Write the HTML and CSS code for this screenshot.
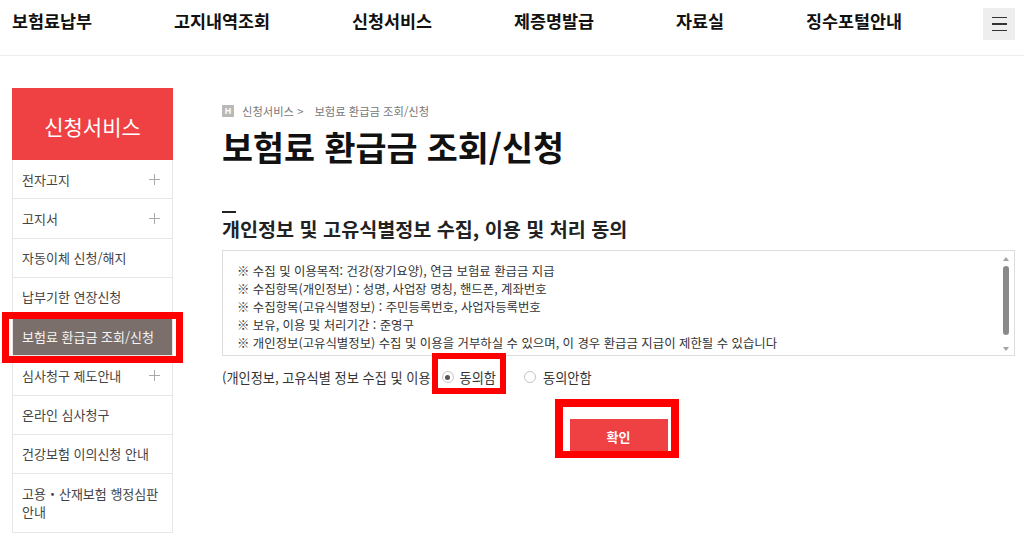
FILE: index.html
```html
<!DOCTYPE html>
<html lang="ko">
<head>
<meta charset="utf-8">
<title>보험료 환급금 조회/신청</title>
<link rel="stylesheet" href="styles.css">
</head>
<body>
<header class="topbar">
  <nav class="gnb">
    <a class="gnb-item">보험료납부</a>
    <a class="gnb-item">고지내역조회</a>
    <a class="gnb-item">신청서비스</a>
    <a class="gnb-item">제증명발급</a>
    <a class="gnb-item">자료실</a>
    <a class="gnb-item">징수포털안내</a>
  </nav>
  <button class="menu-btn" aria-label="menu">
    <span class="menu-line"></span><span class="menu-line"></span><span class="menu-line"></span>
  </button>
</header>

<div class="page">
  <aside class="lnb">
    <div class="lnb-title">신청서비스</div>
    <ul class="lnb-list">
      <li class="lnb-item">전자고지<svg class="plus" width="11" height="11" viewBox="0 0 11 11"><path d="M5.5 0v11M0 5.5h11" stroke="#aaa" stroke-width="1"/></svg></li>
      <li class="lnb-item">고지서<svg class="plus" width="11" height="11" viewBox="0 0 11 11"><path d="M5.5 0v11M0 5.5h11" stroke="#aaa" stroke-width="1"/></svg></li>
      <li class="lnb-item">자동이체 신청/해지</li>
      <li class="lnb-item">납부기한 연장신청</li>
      <li class="lnb-item is-active">보험료 환급금 조회/신청</li>
      <li class="lnb-item">심사청구 제도안내<svg class="plus" width="11" height="11" viewBox="0 0 11 11"><path d="M5.5 0v11M0 5.5h11" stroke="#aaa" stroke-width="1"/></svg></li>
      <li class="lnb-item">온라인 심사청구</li>
      <li class="lnb-item">건강보험 이의신청 안내</li>
      <li class="lnb-item lnb-item-wrap">고용・산재보험 행정심판 안내</li>
    </ul>
  </aside>

  <main class="content">
    <div class="breadcrumb">
      <span class="home-icon">H</span>
      <span class="crumb">신청서비스 &gt;</span>
      <span class="crumb crumb-current">보험료 환급금 조회/신청</span>
    </div>
    <h1 class="page-title">보험료 환급금 조회/신청</h1>
    <div class="title-bar"></div>
    <h2 class="section-title">개인정보 및 고유식별정보 수집, 이용 및 처리 동의</h2>
    <div class="terms">
      <div class="terms-text">
        <p>※ 수집 및 이용목적: 건강(장기요양), 연금 보험료 환급금 지급</p>
        <p>※ 수집항목(개인정보) : 성명, 사업장 명칭, 핸드폰, 계좌번호</p>
        <p>※ 수집항목(고유식별정보) : 주민등록번호, 사업자등록번호</p>
        <p>※ 보유, 이용 및 처리기간 : 준영구</p>
        <p>※ 개인정보(고유식별정보) 수집 및 이용을 거부하실 수 있으며, 이 경우 환급금 지급이 제한될 수 있습니다</p>
      </div>
      <div class="scrollbar">
        <span class="arrow-up"></span>
        <span class="thumb"></span>
        <span class="arrow-down"></span>
      </div>
    </div>
    <div class="agree-row">
      <span class="agree-label">(개인정보, 고유식별 정보 수집 및 이용</span>
      <label class="radio"><span class="radio-dot is-checked"></span>동의함</label>
      <label class="radio radio-second"><span class="radio-dot"></span>동의안함</label>
    </div>
    <div class="btn-row">
      <button class="btn-confirm">확인</button>
    </div>
  </main>
</div>

<div class="mark mark-menu"></div>
<div class="mark mark-radio"></div>
<div class="mark mark-btn"></div>
</body>
</html>
```

FILE: styles.css
```css
* { box-sizing: border-box; }
html, body { margin: 0; padding: 0; }
body {
  position: relative;
  width: 1024px;
  height: 542px;
  overflow: hidden;
  background: #fff;
  color: #333;
  font-family: "Noto Sans CJK KR", "Noto Sans", sans-serif;
}
ul, p, h1, h2 { margin: 0; padding: 0; }
ul { list-style: none; }

/* top bar */
.topbar {
  display: flex;
  align-items: flex-start;
  height: 56px;
  padding: 0 9px 0 12px;
  border-bottom: 1px solid #ececec;
}
.gnb {
  display: flex;
  gap: 82px;
  padding-top: 10px;
}
.gnb-item {
  font-size: 17.4px;
  font-weight: 700;
  line-height: 22px;
  color: #111;
}
.menu-btn {
  margin-left: auto;
  margin-top: 8px;
  width: 32px;
  height: 32px;
  border: 0;
  padding: 0;
  background: #eeeeee;
  display: flex;
  flex-direction: column;
  align-items: center;
  justify-content: center;
  gap: 5px;
}
.menu-line {
  display: block;
  width: 15px;
  height: 1.6px;
  background: #333;
}

/* page layout */
.page {
  display: flex;
  gap: 49px;
  padding: 32px 9px 0 12px;
}

/* left nav */
.lnb {
  width: 161px;
  flex: none;
}
.lnb-title {
  height: 72px;
  background: #ef4044;
  color: #fff;
  font-size: 21px;
  font-weight: 400;
  display: flex;
  align-items: center;
  justify-content: center;
  padding-top: 3px;
}
.lnb-list {
  border-left: 1px solid #e6e6e6;
  border-right: 1px solid #e6e6e6;
}
.lnb-item {
  display: flex;
  align-items: center;
  justify-content: space-between;
  height: 39.25px;
  padding: 0 12px 0 9px;
  border-bottom: 1px solid #e6e6e6;
  font-size: 13px;
  color: #444;
}
.lnb-item.is-active {
  background: #7a6f6b;
  color: #f4f4f4;
}
.lnb-item-wrap {
  height: 59px;
  line-height: 18px;
  padding-right: 10px;
}
.plus { flex: none; }

/* content */
.content {
  flex: 1;
  display: flex;
  flex-direction: column;
}
.breadcrumb {
  display: flex;
  align-items: center;
  gap: 8px;
  margin-top: 15px;
  height: 16px;
  font-size: 11.3px;
  color: #777;
}
.home-icon {
  width: 12px;
  height: 12px;
  background: #b9b9b9;
  color: #fff;
  font-size: 9px;
  font-weight: 700;
  line-height: 12px;
  text-align: center;
  font-family: "Liberation Sans", sans-serif;
}
.crumb-current { margin-left: 3px; }
.page-title {
  margin-top: 8px;
  font-size: 33.7px;
  line-height: 40px;
  font-weight: 700;
  color: #111;
}
.title-bar {
  margin-top: 44px;
  width: 14px;
  height: 2px;
  background: #222;
}
.section-title {
  margin-top: 4px;
  font-size: 19.6px;
  line-height: 24px;
  font-weight: 700;
  color: #222;
}
.terms {
  margin-top: 9px;
  height: 106px;
  border: 1px solid #dddddd;
  display: flex;
}
.terms-text {
  flex: 1;
  padding: 11px 14px 0;
  overflow: hidden;
  font-size: 12.4px;
  line-height: 18px;
  color: #333;
}
.scrollbar {
  flex: none;
  width: 16px;
  display: flex;
  flex-direction: column;
  align-items: center;
  padding: 6px 0 4px;
}
.arrow-up, .arrow-down {
  width: 0;
  height: 0;
  border-left: 3.5px solid transparent;
  border-right: 3.5px solid transparent;
}
.arrow-up { border-bottom: 4px solid #a3a3a3; }
.arrow-down { border-top: 4px solid #a3a3a3; margin-top: auto; }
.thumb {
  margin-top: 5px;
  width: 6px;
  height: 69px;
  border-radius: 3px;
  background: #8a8a8a;
}
.agree-row {
  display: flex;
  align-items: center;
  margin-top: 11px;
  height: 20px;
  font-size: 13.2px;
  color: #333;
}
.radio {
  display: flex;
  align-items: center;
  gap: 6px;
  margin-left: 11px;
}
.radio-second { margin-left: 28px; gap: 7px; }
.radio-dot {
  width: 12px;
  height: 12px;
  border-radius: 50%;
  border: 1px solid #c4c4c4;
  background: #fff;
  display: flex;
  align-items: center;
  justify-content: center;
}
.radio-dot.is-checked::after {
  content: "";
  width: 5px;
  height: 5px;
  border-radius: 50%;
  background: #5a5252;
}
.btn-row {
  display: flex;
  justify-content: center;
  margin-top: 32px;
}
.btn-confirm {
  width: 98px;
  height: 34px;
  border: 0;
  background: #ef4044;
  color: #fff;
  font-family: "Noto Sans CJK KR", sans-serif;
  font-size: 13px;
  font-weight: 700;
  padding: 0;
}

/* annotation boxes drawn over the screenshot */
.mark {
  position: absolute;
  border: 7px solid #ff0000;
}
.mark-menu { left: 2px; top: 312px; width: 181px; height: 51px; }
.mark-radio { left: 432px; top: 353px; width: 74px; height: 41px; border-width: 6px; }
.mark-btn { left: 555px; top: 399px; width: 124px; height: 59px; border-width: 8px 8px 7px 8px; }
```
